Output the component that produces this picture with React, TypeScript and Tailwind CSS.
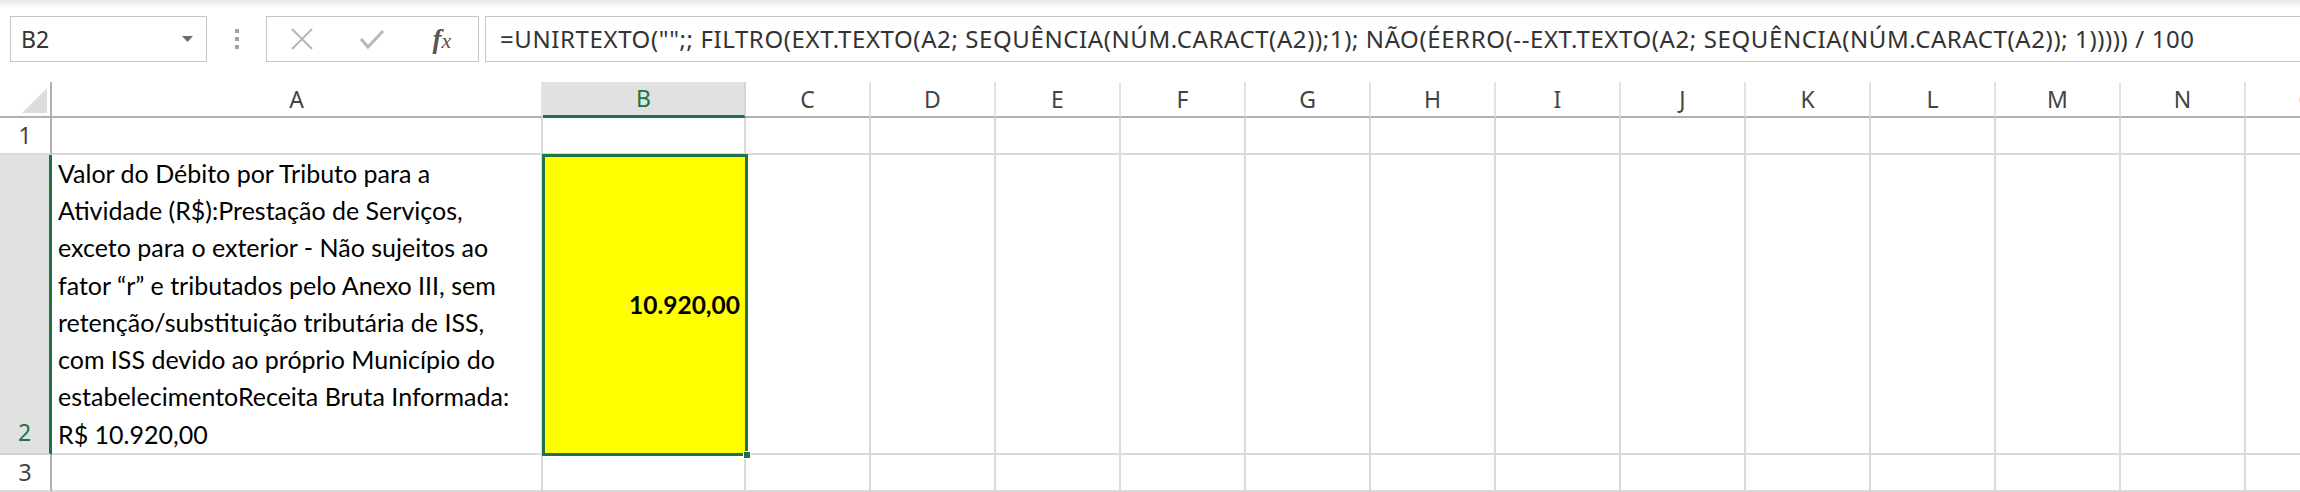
import React from "react";

const cols = ["C", "D", "E", "F", "G", "H", "I", "J", "K", "L", "M", "N", "O"];

const lines = [
  "Valor do Débito por Tributo para a",
  "Atividade (R$):Prestação de Serviços,",
  "exceto para o exterior - Não sujeitos ao",
  "fator “r” e tributados pelo Anexo III, sem",
  "retenção/substituição tributária de ISS,",
  "com ISS devido ao próprio Município do",
  "estabelecimentoReceita Bruta Informada:",
  "R$ 10.920,00",
];

const formula =
  '=UNIRTEXTO("";; FILTRO(EXT.TEXTO(A2; SEQUÊNCIA(NÚM.CARACT(A2));1); NÃO(ÉERRO(--EXT.TEXTO(A2; SEQUÊNCIA(NÚM.CARACT(A2)); 1))))) / 100';

export default function App() {
  return (
    <div className="w-[2300px] h-[492px] overflow-hidden bg-white font-['Noto_Sans',sans-serif]">
      <div className="h-[8px] bg-linear-to-b from-[#e8e8e8] to-white" />
      <div className="flex items-start h-[74px] pt-[8px] pl-[10px]">
        <div className="w-[197px] h-[46px] shrink-0 border border-[#c6c6c6] flex items-center justify-between pl-[10px] pr-[13px] text-[23px] text-[#333]">
          <span>B2</span>
          <svg width="11" height="6" viewBox="0 0 11 6">
            <path d="M0 0 L11 0 L5.5 6 Z" fill="#6b6b6b" />
          </svg>
        </div>
        <div className="w-[59px] h-[46px] shrink-0 flex flex-col items-center justify-center gap-[4px]">
          <div className="w-[4px] h-[4px] bg-[#a3a3a3]" />
          <div className="w-[4px] h-[4px] bg-[#a3a3a3]" />
          <div className="w-[4px] h-[4px] bg-[#a3a3a3]" />
        </div>
        <div className="w-[213px] h-[46px] shrink-0 border border-[#c6c6c6] flex items-center">
          <div className="w-[70px] flex justify-center">
            <svg width="24" height="24" viewBox="0 0 24 24">
              <path d="M2 2 L22 22 M22 2 L2 22" stroke="#b8b8b8" strokeWidth="2.2" fill="none" />
            </svg>
          </div>
          <div className="w-[70px] flex justify-center">
            <svg width="26" height="22" viewBox="0 0 26 22">
              <path d="M2 11 L9 19 L24 3" stroke="#b8b8b8" strokeWidth="3" fill="none" />
            </svg>
          </div>
          <div className="w-[70px] flex justify-center">
            <span className="font-['Liberation_Serif',serif] italic text-[27px] text-[#555] leading-none">
              <span className="font-bold">f</span>
              <span className="text-[22px]">x</span>
            </span>
          </div>
        </div>
        <div className="ml-[6px] flex-1 h-[46px] border border-r-0 border-[#c6c6c6] flex items-center pl-[14px] text-[24px] tracking-[0.6px] text-[#333] whitespace-nowrap">
          {formula}
        </div>
      </div>

      <div className="grid grid-cols-[52px_491px_203px_repeat(13,125px)] grid-rows-[36px_37px_300px_37px]">
        {/* header row */}
        <div className="border-r-2 border-b-2 border-[#b0b0b0] relative">
          <svg className="absolute left-[22px] top-[6px]" width="25" height="25" viewBox="0 0 25 25">
            <path d="M25 0 L25 25 L0 25 Z" fill="#dcdcdc" />
          </svg>
        </div>
        <div className="border-r-2 border-r-[#e3e3e3] border-b-2 border-b-[#b0b0b0] flex items-center justify-center text-[23px] text-[#444]">
          A
        </div>
        <div className="bg-[#e1e1e1] border-r-2 border-r-[#d6d6d6] border-b-[3px] border-b-[#217346] flex items-center justify-center text-[23px] text-[#217346]">
          B
        </div>
        {cols.map((c) => (
          <div
            key={c}
            className="border-r-2 border-r-[#e3e3e3] border-b-2 border-b-[#b0b0b0] flex items-center justify-center text-[23px] text-[#444]"
          >
            {c}
          </div>
        ))}

        {/* row 1 */}
        <div className="border-r-2 border-r-[#b0b0b0] border-b-2 border-b-[#dadada] flex items-center justify-center text-[23px] text-[#444]">
          1
        </div>
        <div className="border-r-2 border-b-2 border-[#dadada]" />
        <div className="border-r-2 border-b-2 border-[#dadada]" />
        {cols.map((c) => (
          <div key={c} className="border-r-2 border-b-2 border-[#dadada]" />
        ))}

        {/* row 2 */}
        <div className="bg-[#e1e1e1] border-r-[3px] border-r-[#217346] border-b-2 border-b-[#d0d0d0] flex items-end justify-center pb-[2px] text-[23px] text-[#217346] leading-[37px]">
          2
        </div>
        <div className="border-r-2 border-b-2 border-[#dadada] flex flex-col justify-end pl-[6px] font-['Lato',sans-serif] text-[25px] leading-[37.3px] text-black">
          {lines.map((l) => (
            <div key={l} className="whitespace-nowrap">
              {l}
            </div>
          ))}
        </div>
        <div className="relative bg-[#ffff00] flex items-center justify-end pr-[6px] font-['Lato',sans-serif] font-bold text-[24.5px] text-black">
          <span>10.920,00</span>
          <div className="absolute z-10 -left-[1px] -top-[1px] -right-[2px] -bottom-[1px] border-[3px] border-[#217346]" />
          <div className="absolute z-20 -right-[5px] -bottom-[4px] w-[8px] h-[8px] bg-[#217346] border border-white" />
        </div>
        {cols.map((c) => (
          <div key={c} className="border-r-2 border-b-2 border-[#dadada]" />
        ))}

        {/* row 3 */}
        <div className="border-r-2 border-r-[#b0b0b0] border-b-2 border-b-[#dadada] flex items-center justify-center text-[23px] text-[#444]">
          3
        </div>
        <div className="border-r-2 border-b-2 border-[#dadada]" />
        <div className="border-r-2 border-b-2 border-[#dadada]" />
        {cols.map((c) => (
          <div key={c} className="border-r-2 border-b-2 border-[#dadada]" />
        ))}
      </div>
    </div>
  );
}
